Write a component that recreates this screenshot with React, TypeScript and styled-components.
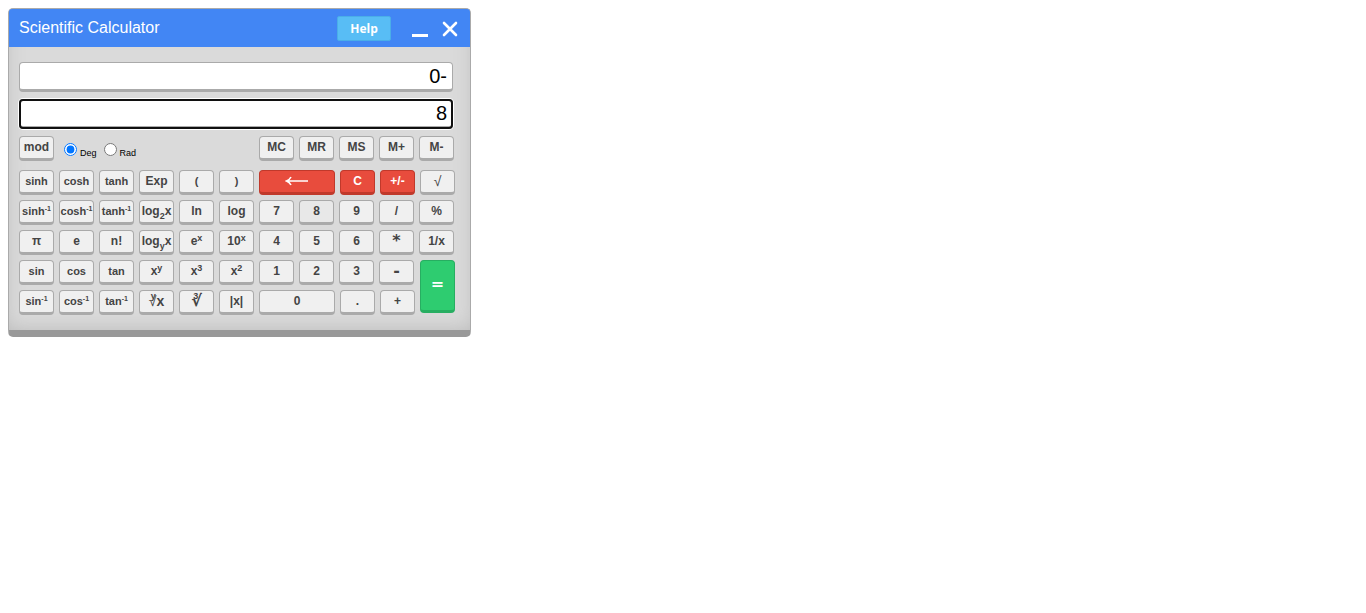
import React from 'react';
import styled, { createGlobalStyle } from 'styled-components';

const GlobalStyle = createGlobalStyle`
  body {
    margin: 8px;
    background: #fff;
    font-family: "Liberation Sans", Arial, sans-serif;
  }
  *, *::before, *::after { box-sizing: border-box; }
`;

const Calculator = styled.main`
  width: fit-content;
  border: 1px solid #aaa;
  border-bottom: 7px solid #999;
  border-radius: 5px;
  background: #dadada;
  box-shadow: inset 0 -4px 20px -4px #bababa;
`;

const TitleBar = styled.header`
  display: flex;
  align-items: center;
  height: 38px;
  padding: 0 12px 0 10px;
  border-radius: 3px 3px 0 0;
  background: #4286f4;
  color: #fff;
`;

const Title = styled.h1`
  flex: 1;
  margin: 0;
  font-size: 16px;
  line-height: 18px;
  font-weight: 400;
`;

const HelpButton = styled.button`
  width: 54px;
  height: 25px;
  margin-right: 21px;
  padding: 1px 0 0;
  border: 1px solid #4aaee8;
  border-radius: 2px;
  background: #58bdf5;
  color: #fff;
  font: 700 12px/16px "Open Sans", sans-serif;
`;

const WindowButton = styled.button`
  display: flex;
  width: 16px;
  height: 18px;
  margin-left: 14px;
  padding: 2px 0 0;
  border: 0;
  background: none;
  color: #fff;

  ${HelpButton} + & { margin-left: 0; }
`;

const Body = styled.div`
  display: flex;
  flex-direction: column;
  padding: 15px 15px 15px 10px;
`;

const Display = styled.input<{ $active?: boolean }>`
  height: 30px;
  margin: 0 2px 7px 0;
  padding: 0 5px;
  border: 1px solid #aaa;
  border-bottom-width: 3px;
  border-radius: 4px;
  outline: ${p => (p.$active ? '2px solid #101010' : 'none')};
  outline-offset: -2px;
  box-shadow: ${p => (p.$active ? '0 0 0 1px #fff' : 'none')};
  background: #fff;
  color: #000;
  font: 20px/24px "Liberation Sans", Arial, sans-serif;
  text-align: right;
`;

const Keys = styled.div`
  display: flex;
  flex-direction: column;
  gap: 5px;
`;

const Row = styled.div`
  display: flex;
  gap: 5px;
`;

const TopRow = styled(Row)`
  margin-bottom: 4px;
`;

const AngleUnit = styled.div`
  display: flex;
  flex: 0 0 200px;
  gap: 7px;
  padding: 7px 0 0 5px;
  margin-right: -5px;
`;

const UnitLabel = styled.label`
  display: flex;
  align-items: flex-start;
  gap: 3px;
  height: 16px;
  font-size: 9px;
  line-height: 20px;
  color: #000;
`;

const Radio = styled.input`
  width: 13px;
  height: 13px;
  margin: 0;
`;

const tones = {
  plain: { fill: '#f0f0f0', edge: '#aaa', text: '#444' },
  hover: { fill: '#e8e8e8', edge: '#aaa', text: '#444' },
  red: { fill: '#e84c3d', edge: '#c0392b', text: '#fff' },
  green: { fill: '#2ecc70', edge: '#27ae61', text: '#fff' },
};

type KeyProps = { $size?: number; $tone?: keyof typeof tones; $wide?: boolean; $tall?: boolean };

const Key = styled.button<KeyProps>`
  display: flex;
  flex: none;
  align-items: center;
  justify-content: center;
  width: ${p => (p.$wide ? 76 : 35)}px;
  height: ${p => (p.$tall ? 53 : 25)}px;
  padding: 0 0 ${p => (p.$tall ? 3 : 1)}px;
  border: 1px solid ${p => tones[p.$tone ?? 'plain'].edge};
  border-bottom-width: 3px;
  border-radius: 4px;
  background: ${p => tones[p.$tone ?? 'plain'].fill};
  color: ${p => tones[p.$tone ?? 'plain'].text};
  font: 700 ${p => p.$size ?? 12}px/16px "Liberation Sans", Arial, sans-serif;
  white-space: nowrap;

  sup, sub { line-height: 0; font-size: 9px; }
  sup { vertical-align: 4px; }
  sub { vertical-align: -4px; }
`;

const Inverse = styled.sup`
  && { font-size: 7px; }
`;

const MathKey = styled(Key)`
  font-family: "DejaVu Sans", sans-serif;
`;

const Fn = ({ name, inverse }: { name: string; inverse?: boolean }) => (
  <Key $size={11}><span>{name}{inverse && <Inverse>-1</Inverse>}</span></Key>
);

const Power = ({ base, exp }: { base: string; exp: string }) => (
  <Key><span>{base}<sup>{exp}</sup></span></Key>
);

const Log = ({ base }: { base: string }) => (
  <Key><span>log<sub>{base}</sub>x</span></Key>
);

const RootIndex = styled.sup`
  && { margin: 0 -7px 0 2px; vertical-align: 7px; }
`;

const RootSign = styled.span<{ $bold?: boolean }>`
  font-weight: ${p => (p.$bold ? 700 : 400)};
  font-size: ${p => (p.$bold ? 16 : 14)}px;
  font-family: ${p => (p.$bold ? '"DejaVu Sans"' : '"Liberation Sans"')}, sans-serif;
`;

const EqualsBlock = styled(Row)`
  align-items: flex-start;
`;

export default function App() {
  return (
    <>
      <GlobalStyle />
      <Calculator>
        <TitleBar>
          <Title>Scientific Calculator</Title>
          <HelpButton>Help</HelpButton>
          <WindowButton aria-label="Minimize">
            <svg width="16" height="16" viewBox="0 0 16 16"><path d="M0 14.5h16" stroke="currentColor" strokeWidth="3" /></svg>
          </WindowButton>
          <WindowButton aria-label="Close">
            <svg width="16" height="16" viewBox="0 0 16 16"><path d="M2 2l12 12M14 2L2 14" stroke="currentColor" strokeWidth="2.6" strokeLinecap="round" /></svg>
          </WindowButton>
        </TitleBar>
        <Body>
          <Display aria-label="Expression" defaultValue="0-" />
          <Display aria-label="Result" defaultValue="8" $active />
          <Keys>
            <TopRow>
              <Key>mod</Key>
              <AngleUnit>
                <UnitLabel><Radio type="radio" name="unit" defaultChecked />Deg</UnitLabel>
                <UnitLabel><Radio type="radio" name="unit" />Rad</UnitLabel>
              </AngleUnit>
              {['MC', 'MR', 'MS', 'M+', 'M-'].map(k => <Key key={k}>{k}</Key>)}
            </TopRow>
            <Row>
              <Fn name="sinh" /><Fn name="cosh" /><Fn name="tanh" />
              <Key>Exp</Key><Key $size={11}>(</Key><Key $size={11}>)</Key>
              <Key $tone="red" $wide aria-label="Backspace">
                <svg width="24" height="12" viewBox="0 0 24 12" fill="none" stroke="currentColor" strokeWidth="1.6">
                  <path d="M2 6h21M6 2C5 4 4 5 1.500 6C4 7 5 8 6 10" />
                </svg>
              </Key>
              <Key $tone="red">C</Key>
              <Key $tone="red">+/-</Key>
              <Key><RootSign>√</RootSign></Key>
            </Row>
            <Row>
              <Fn name="sinh" inverse /><Fn name="cosh" inverse /><Fn name="tanh" inverse />
              <Log base="2" /><Key>ln</Key><Key>log</Key>
              <Key>7</Key><Key $tone="hover">8</Key><Key>9</Key><Key>/</Key><Key>%</Key>
            </Row>
            <Row>
              <Key>π</Key><Key>e</Key><Key>n!</Key>
              <Log base="y" /><Power base="e" exp="x" /><Power base="10" exp="x" />
              <Key>4</Key><Key>5</Key><Key>6</Key><MathKey $size={16}>*</MathKey><Key>1/x</Key>
            </Row>
            <EqualsBlock>
              <Keys>
                <Row>
                  <Fn name="sin" /><Fn name="cos" /><Fn name="tan" />
                  <Power base="x" exp="y" /><Power base="x" exp="3" /><Power base="x" exp="2" />
                  <Key>1</Key><Key>2</Key><Key>3</Key><MathKey $size={16}>-</MathKey>
                </Row>
                <Row>
                  <Fn name="sin" inverse /><Fn name="cos" inverse /><Fn name="tan" inverse />
                  <Key $size={14}><span><RootIndex>y</RootIndex><RootSign>√</RootSign>x</span></Key>
                  <Key $size={14}><span><RootIndex>3</RootIndex><RootSign $bold>√</RootSign></span></Key>
                  <Key>|x|</Key>
                  <Key $wide>0</Key><Key>.</Key><Key>+</Key>
                </Row>
              </Keys>
              <MathKey $tone="green" $tall $size={16}>=</MathKey>
            </EqualsBlock>
          </Keys>
        </Body>
      </Calculator>
    </>
  );
}
